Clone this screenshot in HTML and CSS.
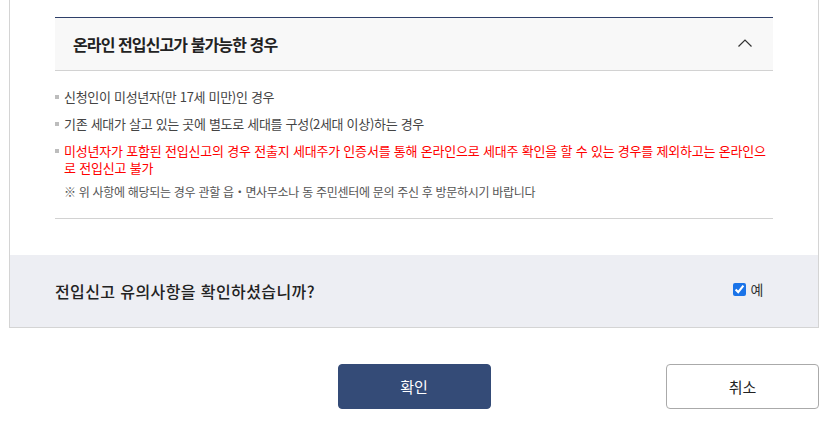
FILE: index.html
```html
<!DOCTYPE html>
<html lang="ko">
<head>
<meta charset="utf-8">
<title>전입신고 유의사항</title>
<link rel="stylesheet" href="styles.css">
</head>
<body>
<div class="page">
  <section class="notice-box">
    <div class="notice-body">
      <div class="accordion">
        <div class="acc-head">
          <h3 class="acc-title">온라인 전입신고가 불가능한 경우</h3>
          <svg class="chevron" width="14" height="8" viewBox="0 0 14 8" aria-hidden="true">
            <path d="M0.5 7.5 L7 1 L13.5 7.5" fill="none" stroke="#333" stroke-width="1.2"/>
          </svg>
        </div>
        <div class="acc-content">
          <ul class="rules">
            <li>신청인이 미성년자(만 17세 미만)인 경우</li>
            <li>기존 세대가 살고 있는 곳에 별도로 세대를 구성(2세대 이상)하는 경우</li>
            <li class="red">미성년자가 포함된 전입신고의 경우 전출지 세대주가 인증서를 통해 온라인으로 세대주 확인을 할 수 있는 경우를 제외하고는 온라인으로 전입신고 불가</li>
          </ul>
          <p class="note">※ 위 사항에 해당되는 경우 관할 읍・면사무소나 동 주민센터에 문의 주신 후 방문하시기 바랍니다</p>
        </div>
      </div>
    </div>
    <div class="confirm-row">
      <p class="question">전입신고 유의사항을 확인하셨습니까?</p>
      <label class="yes"><input type="checkbox" checked> 예</label>
    </div>
  </section>
  <div class="actions">
    <button class="btn btn-primary" type="button">확인</button>
    <button class="btn btn-outline" type="button">취소</button>
  </div>
</div>
</body>
</html>
```
FILE: styles.css
```css
* { box-sizing: border-box; }
html, body { margin: 0; padding: 0; background: #fff; }
body {
  font-family: "Noto Sans CJK KR", "Noto Sans", sans-serif;
  color: #222;
  letter-spacing: -0.3px;
}
.page { padding: 0 14px 0 9px; }
.notice-box {
  border: 1px solid #d4d4d4;
  border-top: 0;
  background: #fff;
}
.notice-body { padding: 17px 45px 36px; }
.accordion { border-top: 1px solid #2e3f69; }
.acc-head {
  display: flex;
  align-items: center;
  justify-content: space-between;
  height: 53px;
  padding: 0 21px 0 18px;
  background: #f8f8f8;
  border-bottom: 1px solid #d2d2d2;
}
.acc-title {
  margin: 0;
  font-size: 16px;
  font-weight: 700;
  color: #222;
  letter-spacing: -0.9px;
}
.chevron { display: block; margin-top: -2px; }
.acc-content {
  padding: 17px 0 18px;
  border-bottom: 1px solid #d2d2d2;
}
.rules { list-style: none; margin: 0; padding: 0; }
.rules li {
  position: relative;
  padding-left: 9px;
  font-size: 13px;
  line-height: 17px;
  color: #444;
  margin-bottom: 10px;
}
.rules li::before {
  content: "";
  position: absolute;
  left: 0;
  top: 7px;
  width: 4px;
  height: 4px;
  background: #bdbdbd;
}
.rules li.red { color: #ff0000; margin-bottom: 0; letter-spacing: -0.2px; }
.note {
  margin: 7px 0 0 9px;
  font-size: 12px;
  line-height: 17px;
  color: #555;
  letter-spacing: -0.3px;
}
.confirm-row {
  display: flex;
  align-items: center;
  justify-content: space-between;
  height: 72px;
  padding: 0 55px 0 45px;
  background: #edeef3;
}
.question {
  margin: 0;
  font-size: 16px;
  font-weight: 500;
  color: #222;
  letter-spacing: 0.4px;
}
.yes {
  display: flex;
  align-items: center;
  font-size: 14px;
  color: #333;
  margin-top: -4px;
}
.yes input {
  width: 13px;
  height: 13px;
  margin: 0 4px 0 0;
  accent-color: #1a73e8;
}
.actions {
  display: grid;
  grid-template-columns: 1fr 153px 1fr;
  margin-top: 36px;
}
.btn {
  height: 45px;
  width: 153px;
  border-radius: 4px;
  font-family: inherit;
  font-size: 15px;
  letter-spacing: 0;
  cursor: pointer;
}
.btn-primary {
  grid-column: 2;
  background: #344b77;
  border: 1px solid #344b77;
  color: #fff;
}
.btn-outline {
  grid-column: 3;
  justify-self: end;
  background: #fff;
  border: 1px solid #aaa;
  color: #222;
}
```
